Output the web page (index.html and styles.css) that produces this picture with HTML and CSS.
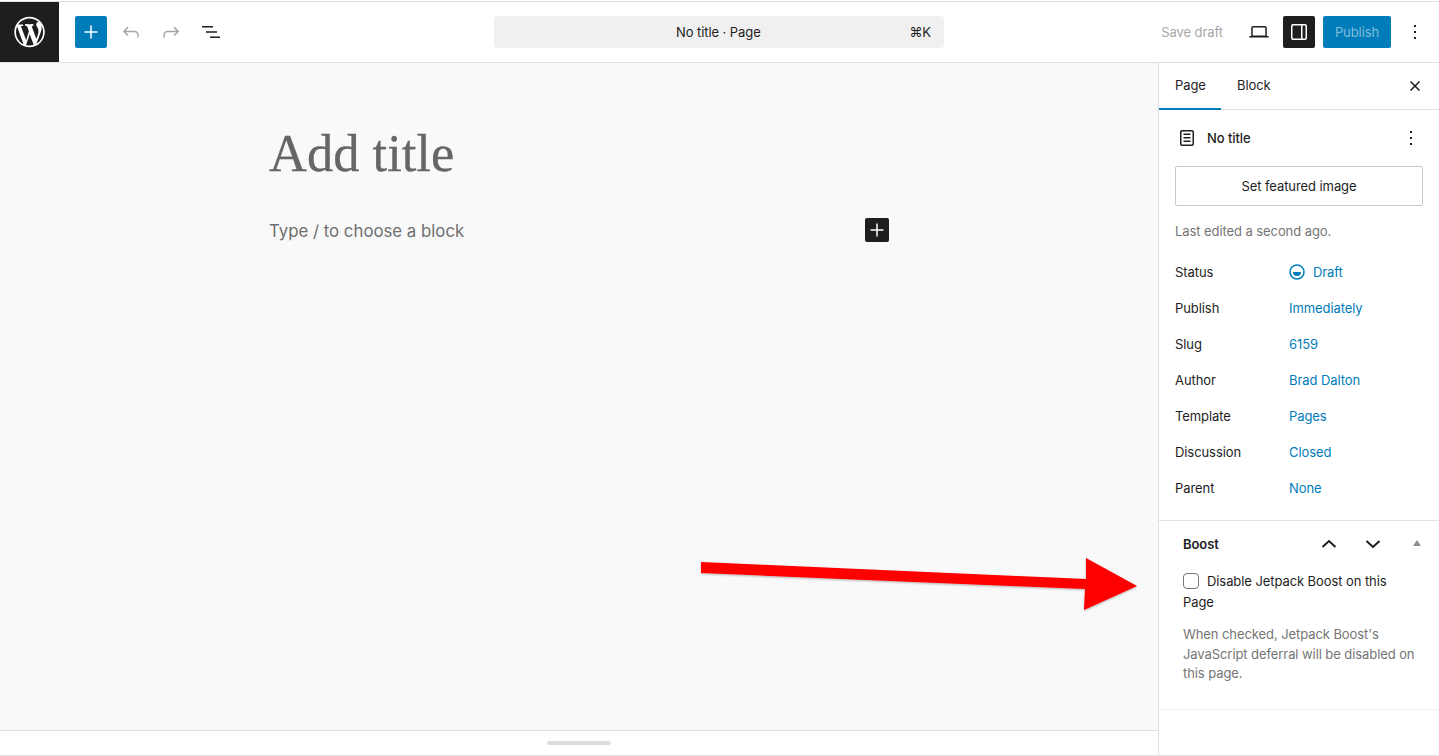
FILE: index.html
```html
<!DOCTYPE html>
<html lang="en">
<head>
<meta charset="utf-8">
<title>Add New Page</title>
<link rel="stylesheet" href="styles.css">
</head>
<body>
<div class="app">
  <header class="topbar">
    <a class="logo"><svg width="32" height="32" viewBox="-.2 -.5 21 21"><path fill="#fff" d="M20 10c0-5.51-4.49-10-10-10C4.48 0 0 4.49 0 10c0 5.52 4.48 10 10 10 5.51 0 10-4.48 10-10zM7.78 15.37L4.37 6.22c.55-.02 1.17-.08 1.17-.08.5-.06.44-1.13-.06-1.11 0 0-1.45.11-2.37.11-.18 0-.37 0-.58-.01C4.12 2.69 6.87 1.11 10 1.11c2.33 0 4.45.87 6.05 2.34-.68-.11-1.65.39-1.65 1.58 0 .74.45 1.36.9 2.1.35.61.55 1.36.55 2.46 0 1.49-1.4 5-1.4 5l-3.03-8.37c.54-.02.82-.17.82-.17.5-.05.44-1.25-.06-1.22 0 0-1.44.12-2.38.12-.87 0-2.33-.12-2.33-.12-.5-.03-.56 1.2-.06 1.22l.92.08 1.26 3.41zM17.41 10c.24-.64.74-1.87.43-4.25.7 1.29 1.05 2.71 1.05 4.25 0 3.29-1.73 6.24-4.4 7.78.97-2.59 1.94-5.2 2.92-7.78zM6.1 18.09C3.12 16.65 1.11 13.53 1.11 10c0-1.3.23-2.48.72-3.59C3.25 10.3 4.67 14.2 6.1 18.09zm4.03-6.63l2.58 6.98c-.86.29-1.76.45-2.71.45-.79 0-1.57-.11-2.29-.33.81-2.38 1.62-4.74 2.42-7.1z"/></svg></a>
    <div class="tools">
      <button class="icon-btn primary"><svg width="24" height="24" viewBox="0 0 24 24"><path fill="#fff" d="M11.25 5.5h1.5v5.75h5.75v1.5h-5.75v5.75h-1.5v-5.75H5.5v-1.5h5.75z"/></svg></button>
      <button class="icon-btn"><svg width="24" height="24" viewBox="0 0 24 24"><path fill="#a7a7a7" d="M18.3 11.7c-.6-.6-1.4-.9-2.3-.9H6.7l2.9-3.3-1.1-1-4.5 5L8.5 16l1-1-2.7-2.7H16c.5 0 .9.2 1.3.5 1 1 1 3.4 1 4.5v.3h1.5v-.2c0-1.5 0-4.3-1.5-5.7z"/></svg></button>
      <button class="icon-btn"><svg width="24" height="24" viewBox="0 0 24 24"><path fill="#a7a7a7" d="M15.6 6.5l-1.1 1 2.9 3.3H8c-.9 0-1.7.3-2.3.9-1.4 1.5-1.4 4.2-1.4 5.6v.2h1.5v-.3c0-1.1 0-3.5 1-4.5.3-.3.7-.5 1.3-.5h9.2L14.5 15l1.1 1.1 4.6-4.6-4.6-5z"/></svg></button>
      <button class="icon-btn"><svg width="24" height="24" viewBox="0 0 24 24"><path fill="#1e1e1e" d="M3 6h11v1.5H3zM7 11.25h11v1.5H7zM11 16.5h10V18H11z"/></svg></button>
    </div>
    <div class="center">
      <div class="command">
        <span class="command-title">No title · Page</span>
        <span class="command-key">⌘K</span>
      </div>
    </div>
    <div class="actions">
      <span class="save">Save draft</span>
      <button class="icon-btn view"><svg width="24" height="24" viewBox="0 0 24 24"><path fill="#1e1e1e" d="M20.5 16h-.7V8c0-1.1-.9-2-2-2H6.2c-1.1 0-2 .9-2 2v8h-.7c-.8 0-1.5.7-1.5 1.5h20c0-.8-.7-1.5-1.5-1.5zM5.7 8c0-.3.2-.5.5-.5h11.600c.3 0 .5.2.5.5v7.6H5.7V8z"/></svg></button>
      <button class="icon-btn dark"><svg width="24" height="24" viewBox="0 0 24 24"><path fill="#fff" d="M18 4H6c-1.1 0-2 .9-2 2v12c0 1.1.9 2 2 2h12c1.1 0 2-.9 2-2V6c0-1.1-.9-2-2-2zM5.5 18V6c0-.3.2-.5.5-.5h8v13H6c-.3 0-.5-.2-.5-.5zm13 0c0 .3-.2.5-.5.5h-2.5v-13H18c.3 0 .5.2.5.5v12z"/></svg></button>
      <button class="publish">Publish</button>
      <button class="icon-btn more"><svg width="24" height="24" viewBox="0 0 24 24"><path fill="#1e1e1e" d="M13 19h-2v-2h2v2zm0-6h-2v-2h2v2zm0-6h-2V5h2v2z"/></svg></button>
    </div>
  </header>

  <div class="workspace">
    <main class="editor">
      <div class="canvas">
        <div class="writing">
          <h1 class="title">Add title</h1>
          <div class="block-row">
            <p class="placeholder">Type / to choose a block</p>
            <button class="inserter"><svg width="24" height="24" viewBox="0 0 24 24"><path fill="#fff" d="M11.25 5.5h1.5v5.75h5.75v1.5h-5.75v5.75h-1.5v-5.75H5.5v-1.5h5.75z"/></svg></button>
          </div>
        </div>
      </div>
      <div class="resize-bar"><span class="handle"></span></div>
    </main>

    <aside class="sidebar">
      <div class="tabs">
        <span class="tab active">Page</span>
        <span class="tab">Block</span>
        <button class="close"><svg width="24" height="24" viewBox="0 0 24 24"><path fill="none" stroke="#1e1e1e" stroke-width="1.5" d="M7.500 7.500l9 9M16.500 7.500l-9 9"/></svg></button>
      </div>

      <section class="summary">
        <div class="doc-head">
          <svg class="doc-icon" width="24" height="24" viewBox="0 0 24 24"><path fill="#1e1e1e" d="M15.5 7.5h-7V9h7V7.5zm-7 3.5h7v1.5h-7V11zm7 3.5h-7V16h7v-1.5z"/><path fill="#1e1e1e" d="M17 4H7c-1.1 0-2 .9-2 2v12c0 1.1.9 2 2 2h10c1.1 0 2-.9 2-2V6c0-1.1-.9-2-2-2zm.5 14c0 .3-.2.5-.5.5H7c-.3 0-.5-.2-.5-.5V6c0-.3.2-.5.5-.5h10c.3 0 .5.2.5.5v12z"/></svg>
          <span class="doc-name">No title</span>
          <svg class="doc-more" width="24" height="24" viewBox="0 0 24 24"><path fill="#1e1e1e" d="M13 19h-2v-2h2v2zm0-6h-2v-2h2v2zm0-6h-2V5h2v2z"/></svg>
        </div>
        <div class="featured">Set featured image</div>
        <p class="edited">Last edited a second ago.</p>
        <dl class="meta">
          <div class="meta-row"><dt>Status</dt><dd class="status"><svg width="16" height="16" viewBox="0 0 16 16"><circle cx="8" cy="8" r="7" fill="none" stroke="#007cba" stroke-width="1.5"/><path fill="#007cba" d="M4 8h8a4 4 0 0 1-8 0z"/></svg>Draft</dd></div>
          <div class="meta-row"><dt>Publish</dt><dd>Immediately</dd></div>
          <div class="meta-row"><dt>Slug</dt><dd>6159</dd></div>
          <div class="meta-row"><dt>Author</dt><dd>Brad Dalton</dd></div>
          <div class="meta-row"><dt>Template</dt><dd>Pages</dd></div>
          <div class="meta-row"><dt>Discussion</dt><dd>Closed</dd></div>
          <div class="meta-row"><dt>Parent</dt><dd>None</dd></div>
        </dl>
      </section>

      <section class="boost">
        <div class="boost-head">
          <h2>Boost</h2>
          <span class="boost-arrows">
            <svg width="24" height="24" viewBox="0 0 24 24"><path fill="none" stroke="#1e1e1e" stroke-width="2" d="M5.500 15L12 9l6.500 6"/></svg>
            <svg width="24" height="24" viewBox="0 0 24 24"><path fill="none" stroke="#1e1e1e" stroke-width="2" d="M5.500 9l6.500 6 6.500-6"/></svg>
          </span>
          <span class="caret"></span>
        </div>
        <label class="check"><span class="box"></span>Disable Jetpack Boost on this Page</label>
        <p class="help">When checked, Jetpack Boost's JavaScript deferral will be disabled on this page.</p>
      </section>
    </aside>
  </div>
</div>

<svg class="annotation" width="460" height="70" viewBox="0 0 460 70">
  <defs><filter id="sh" x="-5%" y="-20%" width="110%" height="140%"><feDropShadow dx="0" dy="1" stdDeviation="1" flood-color="#000" flood-opacity=".3"/></filter></defs>
  <path fill="#fe0000" filter="url(#sh)" d="M11 17L396 34V13L447 41 394 65 395 44 11 28z"/>
</svg>
</body>
</html>
```

FILE: styles.css
```css
* { box-sizing: border-box; }
html, body { margin: 0; height: 756px; overflow: hidden; background: #fff; }
body { font-family: Inter, "Liberation Sans", sans-serif; font-size: 13px; letter-spacing: -.08px; color: #1e1e1e; position: relative; }
button { border: 0; background: none; padding: 0; font: inherit; letter-spacing: inherit; cursor: pointer; }
svg { display: block; }

.app { height: 755px; margin-top: 1px; border-top: 1px solid #e0e0e0; border-bottom: 1px solid #e0e0e0; display: flex; flex-direction: column; }

.topbar { height: 61px; flex: none; display: flex; align-items: center; border-bottom: 1px solid #e0e0e0; }
.logo { width: 59px; height: 60px; background: #1e1e1e; display: flex; align-items: center; justify-content: center; flex: none; }
.tools { display: flex; align-items: center; gap: 8px; margin-left: 16px; width: 160px; flex: none; }
.icon-btn { width: 32px; height: 32px; border-radius: 2px; display: flex; align-items: center; justify-content: center; flex: none; }
.primary { background: #007cba; }
.dark { background: #1e1e1e; }

.center { margin-left: 259px; flex: none; }
.command { width: 450px; height: 32px; background: #f0f0f0; border-radius: 4px; display: flex; align-items: center; padding: 0 13px 0 182px; }
.command-title { flex: 1; color: #1e1e1e; }
.command-key { color: #1e1e1e; }

.actions { margin-left: auto; display: flex; align-items: center; padding-right: 8px; }
.save { color: #a7a7a7; margin-right: 20px; }
.view { margin-right: 8px; }
.publish { width: 68px; height: 32px; margin-left: 8px; background: #007cba; color: #80bddc; border-radius: 2px; }
.more { margin-left: 8px; }

.workspace { flex: 1; display: flex; min-height: 0; }
.editor { flex: 1; display: flex; flex-direction: column; min-width: 0; }
.canvas { flex: 1; background: #f9f9f9; padding: 60px 0 0 269px; }
.writing { width: 620px; }
.title { margin: 0; font-family: "Liberation Serif", serif; font-weight: 400; font-size: 52.5px; line-height: 60px; letter-spacing: 0; color: #666; -webkit-text-stroke: .3px #666; }
.block-row { margin-top: 29px; height: 36px; display: flex; align-items: center; justify-content: space-between; }
.placeholder { margin: 1px 0 0; font-size: 16.8px; letter-spacing: 0; color: #6f6f6f; }
.inserter { width: 24px; height: 24px; background: #1e1e1e; border-radius: 2px; display: flex; }
.resize-bar { height: 25px; flex: none; background: #fff; border-top: 1px solid #ddd; display: flex; align-items: center; padding-left: 547px; }
.handle { width: 64px; height: 4px; border-radius: 2px; background: #ddd; margin-top: 0; }

.sidebar { width: 281px; flex: none; border-left: 1px solid #e0e0e0; background: #fff; }
.tabs { height: 47px; display: flex; align-items: stretch; border-bottom: 1px solid #e0e0e0; position: relative; }
.tab { padding: 0 16px 2px; display: flex; align-items: center; }
.tab.active { width: 62px; box-shadow: inset 0 -2px 0 #007cba; margin-bottom: -1px; padding-bottom: 3px; }
.close { margin-left: auto; margin-right: 12px; align-self: center; }

.summary { padding: 16px 16px 0; height: 411px; border-bottom: 1px solid #e0e0e0; }
.doc-head { display: flex; align-items: center; height: 24px; }
.doc-icon { margin-left: 0; }
.doc-name { margin-left: 8px; font-weight: 500; }
.doc-more { margin-left: auto; margin-right: 0; }
.featured { margin-top: 16px; height: 40px; border: 1px solid #c8c8c8; border-radius: 2px; display: flex; align-items: center; justify-content: center; }
.edited { margin: 16px 0 0; color: #757575; line-height: 18px; }
.meta { margin: 14px 0 0; }
.meta-row { height: 36px; display: flex; align-items: center; }
.meta dt { width: 114px; }
.meta dd { margin: 0; color: #007cba; }
.status { display: flex; align-items: center; gap: 8px; }

.boost { padding: 0 16px 0 24px; height: 189px; border-bottom: 1px solid #f0f0f0; }
.boost-head { height: 47px; padding-bottom: 2px; display: flex; align-items: center; }
.boost-head h2 { margin: 0; font-size: 13px; font-weight: 600; flex: 1; }
.boost-arrows { display: flex; gap: 20px; margin-right: 28px; }
.caret { width: 0; height: 0; border-left: 4px solid transparent; border-right: 4px solid transparent; border-bottom: 6px solid #8c8f94; margin-right: 2px; margin-top: -1px; }
.check { display: block; margin-top: 3px; line-height: 21px; padding-right: 20px; }
.box { display: inline-block; width: 16px; height: 16px; border: 1px solid #757575; border-radius: 4px; background: #fff; vertical-align: -3px; margin-right: 8px; }
.help { margin: 12px 0 0; color: #757575; line-height: 19.5px; }

.annotation { position: absolute; left: 690px; top: 545px; pointer-events: none; }
```
